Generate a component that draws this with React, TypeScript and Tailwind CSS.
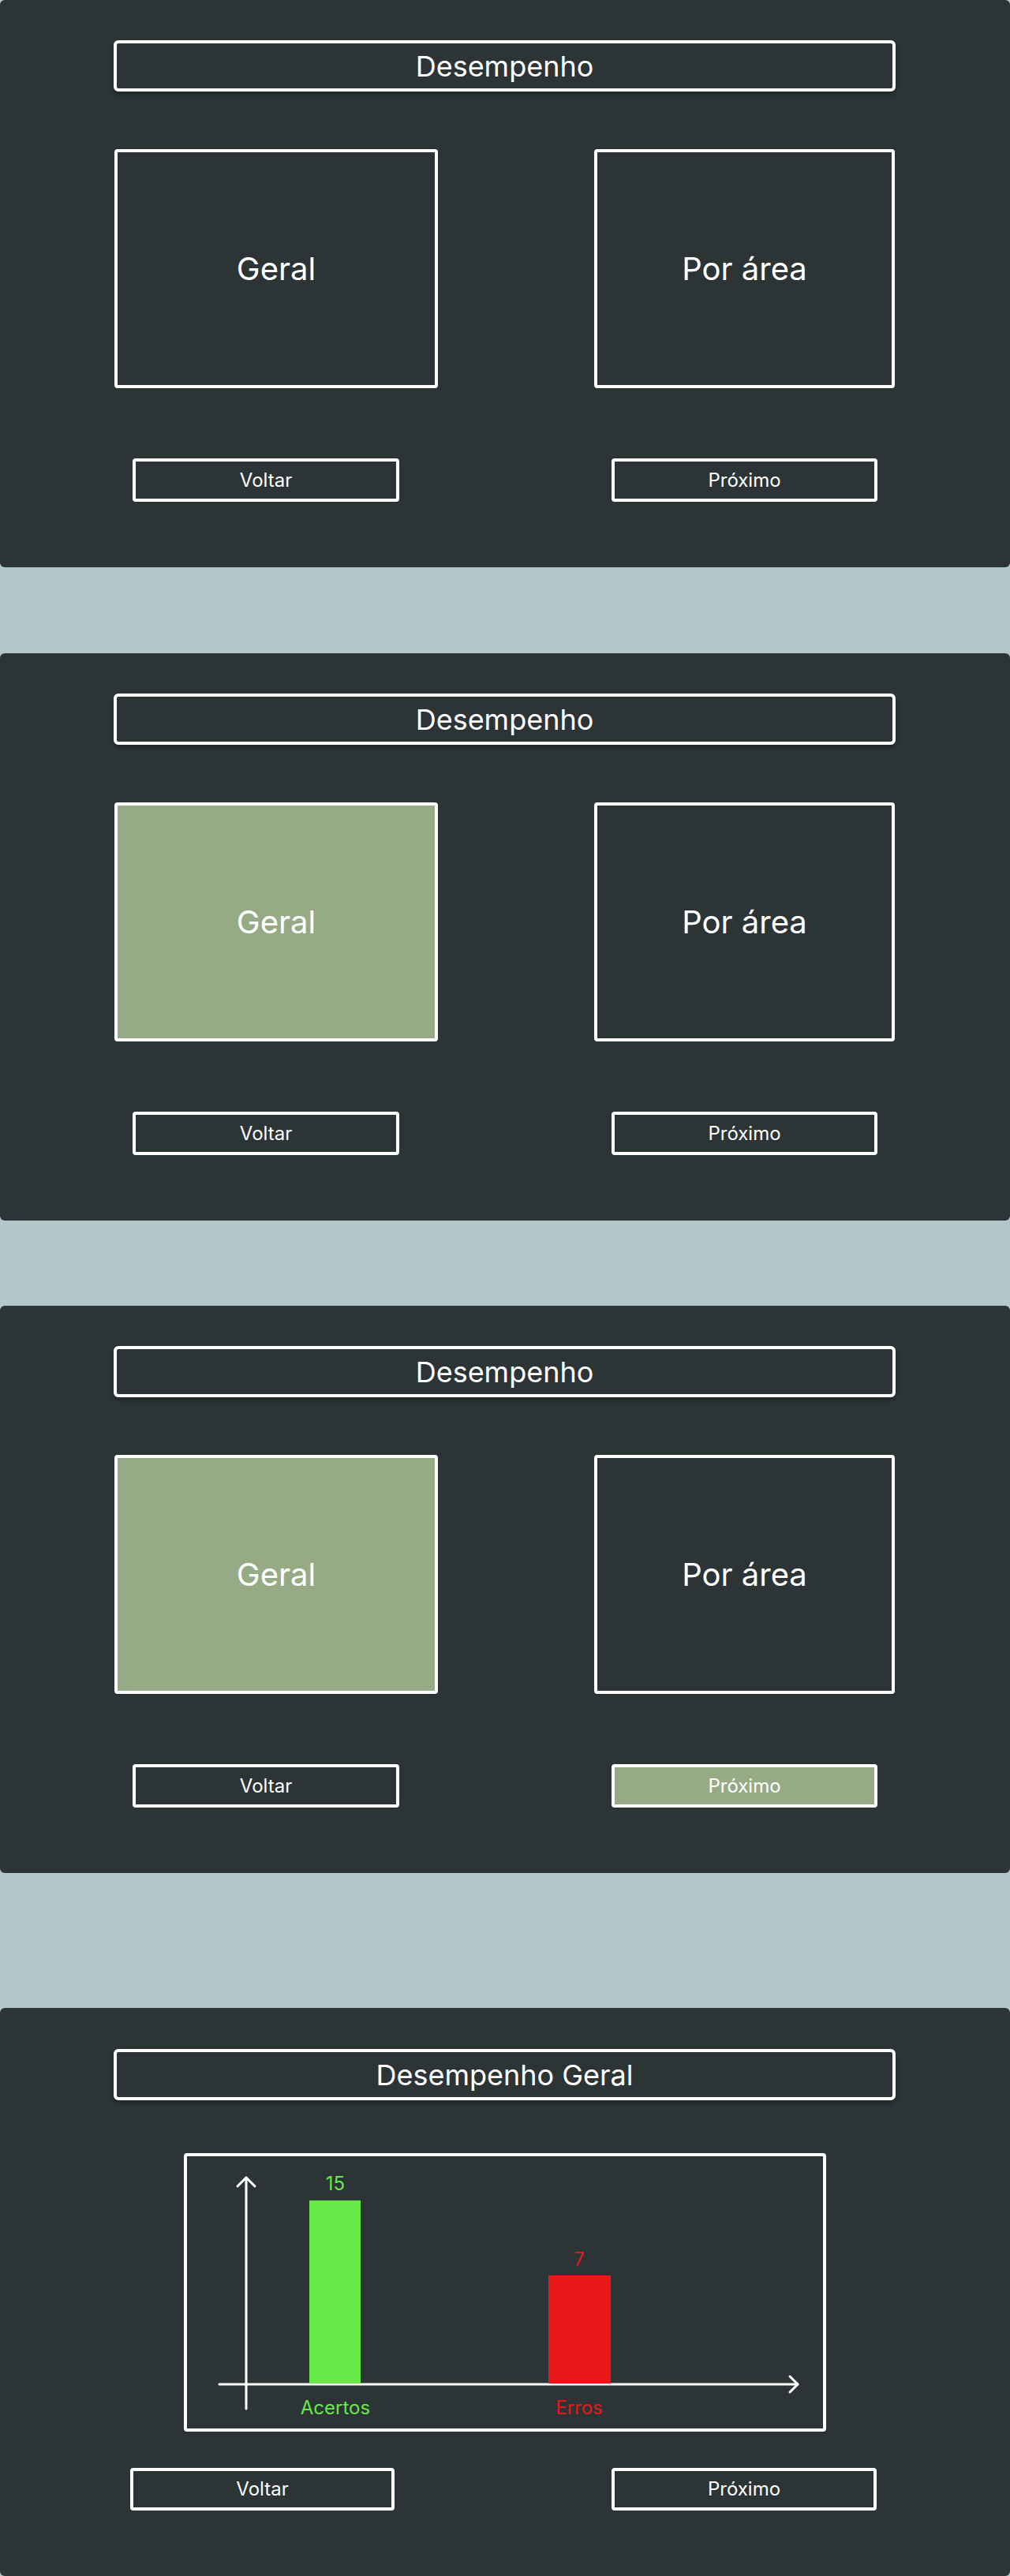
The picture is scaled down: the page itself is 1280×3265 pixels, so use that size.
import React from "react";

type Screen = {
  geralActive?: boolean;
  nextActive?: boolean;
};

const screens: Screen[] = [{}, { geralActive: true }, { geralActive: true, nextActive: true }];

export default function App() {
  return (
    <div className="min-h-[3265px] bg-[#b3c8ca] font-['Inter',sans-serif] text-white">
      <ChoicePanel {...screens[0]} />
      <div className="mt-[109px]">
        <ChoicePanel {...screens[1]} />
      </div>
      <div className="mt-[108px]">
        <ChoicePanel {...screens[2]} />
      </div>
      <div className="mt-[171px]">
        <ChartPanel />
      </div>
    </div>
  );
}

function Title({ children }: { children: React.ReactNode }) {
  return (
    <div className="ml-[144px] flex h-[65px] w-[991px] items-center justify-center rounded-md border-4 border-white text-[36px] leading-none shadow-[0_4px_4px_rgba(0,0,0,0.25)]">
      {children}
    </div>
  );
}

function NavButton({ label, active, className }: { label: string; active?: boolean; className: string }) {
  return (
    <button
      type="button"
      className={`flex items-center justify-center rounded-[4px] border-4 border-white text-[24px] leading-none text-white ${
        active ? "bg-[#97aa86]" : "bg-transparent"
      } ${className}`}
    >
      {label}
    </button>
  );
}

function ChoicePanel({ geralActive, nextActive }: Screen) {
  return (
    <section className="h-[719px] overflow-hidden rounded-md bg-[#2c3436] pt-[51px]">
      <Title>Desempenho</Title>

      <div className="mt-[73px] flex gap-[198px] pl-[145px]">
        <div
          className={`flex h-[303px] w-[410px] items-center justify-center rounded-[4px] border-4 border-white text-[40px] ${
            geralActive ? "bg-[#97aa86]" : ""
          }`}
        >
          Geral
        </div>
        <div className="flex h-[303px] w-[381px] items-center justify-center rounded-[4px] border-4 border-white text-[40px]">
          Por área
        </div>
      </div>

      <div className="mt-[89px] flex gap-[269px] pl-[168px]">
        <NavButton label="Voltar" className="h-[55px] w-[338px]" />
        <NavButton label="Próximo" active={nextActive} className="h-[55px] w-[337px]" />
      </div>
    </section>
  );
}

function ChartPanel() {
  return (
    <section className="h-[720px] overflow-hidden rounded-md bg-[#2c3436] pt-[52px]">
      <Title>Desempenho Geral</Title>

      <div className="mx-auto mt-[67px] h-[353px] w-[814px] rounded-[4px] border-4 border-white">
        <svg width="806" height="345" viewBox="0 0 806 345" className="block">
          <g stroke="#ffffff" strokeWidth="3" fill="none" strokeLinecap="round" strokeLinejoin="round">
            <line x1="75" y1="27" x2="75" y2="320" />
            <polyline points="64,38 75,27 86,38" />
            <line x1="41" y1="289" x2="774" y2="289" />
            <polyline points="764,279 774,289 764,299" />
          </g>
          <rect x="155" y="56" width="65" height="232" fill="#67e947" />
          <rect x="458" y="151" width="79" height="137" fill="#e91818" />
          <g fontFamily="Inter, sans-serif" fontSize="24" textAnchor="middle">
            <text x="188" y="43" fill="#67e947">15</text>
            <text x="497" y="139" fill="#e91818">7</text>
            <text x="188" y="327" fill="#67e947">Acertos</text>
            <text x="497" y="327" fill="#e91818">Erros</text>
          </g>
        </svg>
      </div>

      <div className="mt-[46px] flex gap-[275px] pl-[165px]">
        <NavButton label="Voltar" className="h-[54px] w-[335px]" />
        <NavButton label="Próximo" className="h-[54px] w-[336px]" />
      </div>
    </section>
  );
}
